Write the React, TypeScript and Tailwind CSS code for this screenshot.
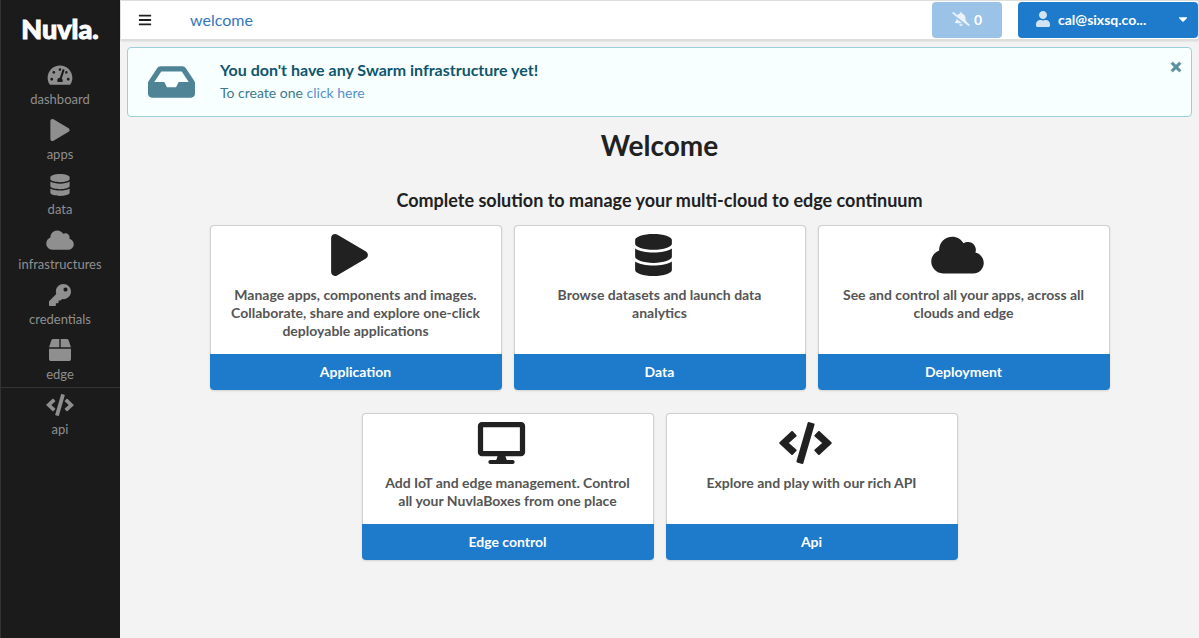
import type { IconType } from 'react-icons';
import {
  FaBars,
  FaBellSlash,
  FaBox,
  FaCaretDown,
  FaCloud,
  FaCode,
  FaDatabase,
  FaDesktop,
  FaInbox,
  FaKey,
  FaPlay,
  FaTachometerAlt,
  FaTimes,
  FaUser,
} from 'react-icons/fa';

const navItems: { label: string; icon: IconType }[] = [
  { label: 'dashboard', icon: FaTachometerAlt },
  { label: 'apps', icon: FaPlay },
  { label: 'data', icon: FaDatabase },
  { label: 'infrastructures', icon: FaCloud },
  { label: 'credentials', icon: FaKey },
  { label: 'edge', icon: FaBox },
  { label: 'api', icon: FaCode },
];

type CardData = { title: string; text: string; icon: IconType };

const cardRows: CardData[][] = [
  [
    {
      title: 'Application',
      text: 'Manage apps, components and images. Collaborate, share and explore one-click deployable applications',
      icon: FaPlay,
    },
    { title: 'Data', text: 'Browse datasets and launch data analytics', icon: FaDatabase },
    { title: 'Deployment', text: 'See and control all your apps, across all clouds and edge', icon: FaCloud },
  ],
  [
    {
      title: 'Edge control',
      text: 'Add IoT and edge management. Control all your NuvlaBoxes from one place',
      icon: FaDesktop,
    },
    { title: 'Api', text: 'Explore and play with our rich API', icon: FaCode },
  ],
];

function Sidebar() {
  return (
    <nav className="w-[120px] shrink-0 bg-[#1b1b1b] shadow-[inset_1px_0_0_#333]">
      <a
        href="#welcome"
        className="flex h-[57px] items-center justify-center text-[27px] leading-none font-black text-white [-webkit-text-stroke:1px_white]"
      >
        Nuvla.
      </a>
      <ul>
        {navItems.map(({ label, icon: Icon }) => (
          <li key={label} className="last:shadow-[inset_0_1px_0_#333435]">
            <a href={`#${label}`} className="flex h-[55px] flex-col items-center pt-[7px] text-[13px] leading-4 text-[#8f8f8f]">
              <Icon className="h-[22px] w-7" />
              <span className="mt-[5px]">{label}</span>
            </a>
          </li>
        ))}
      </ul>
    </nav>
  );
}

function Header() {
  return (
    <header className="flex h-10 items-center border border-[#dddede] bg-white shadow-[0_1px_2px_rgba(34,36,38,0.15)]">
      <button type="button" aria-label="Toggle menu" className="ml-[17px] text-[14px] text-[#1f1f1f]">
        <FaBars />
      </button>
      <a href="#welcome" className="ml-[38px] text-[16px] text-[#3577c1]">
        welcome
      </a>
      <button
        type="button"
        disabled
        className="ml-auto flex h-9 w-[70px] items-center justify-center gap-1 rounded bg-[#9bc3e8] pb-0.5 text-[14px] font-bold text-white"
      >
        <FaBellSlash className="h-[14px] w-[18px] opacity-80" />
        0
      </button>
      <button
        type="button"
        className="ml-4 flex h-9 w-[180px] items-center rounded bg-[#1e7acb] pr-2 pb-0.5 pl-[18px] text-[14px] font-bold text-white"
      >
        <FaUser className="mr-2 h-4 w-[14px] opacity-80" />
        cal@sixsq.co...
        <FaCaretDown className="ml-auto text-[14px]" />
      </button>
    </header>
  );
}

function Notice() {
  return (
    <section className="mx-[7px] mt-[7px] flex h-[70px] items-center rounded border border-[#9ccfd8] bg-[#f8ffff] pl-5">
      <FaInbox className="h-[42px] w-[47px] text-[#4f8396]" />
      <div className="ml-[25px] pb-0.5">
        <h3 className="text-[16px] leading-5 font-bold text-[#0e566c]">You don't have any Swarm infrastructure yet!</h3>
        <p className="mt-[3px] text-[14px] leading-5 text-[#3e7a8c]">
          To create one{' '}
          <a href="#create" className="text-[#558fcd]">
            click here
          </a>
        </p>
      </div>
      <button type="button" aria-label="Dismiss" className="mt-3 mr-2 ml-auto self-start text-[14px] text-[#5b8fa0]">
        <FaTimes className="stroke-current stroke-[24]" />
      </button>
    </section>
  );
}

function Card({ title, text, icon: Icon }: CardData) {
  return (
    <article className="flex w-[292px] flex-col rounded shadow-[0_1px_2px_rgba(34,36,38,0.15)]">
      <div className="flex grow flex-col items-center rounded-t border border-b-0 border-[#cfcfcf] bg-white px-[14px] pt-2 pb-[14px]">
        <Icon className="mr-3 h-[42px] w-[53px] text-[#212121]" />
        <p className="mt-[10px] text-center text-[14px] leading-[18px] font-bold text-[#555]">{text}</p>
      </div>
      <button type="button" className="h-9 rounded-b bg-[#1e7acb] pb-0.5 text-[14px] font-bold text-white">
        {title}
      </button>
    </article>
  );
}

export default function App() {
  return (
    <div className="flex min-h-screen bg-[#f3f3f3] font-[Lato,sans-serif]">
      <Sidebar />
      <div className="min-w-0 grow">
        <Header />
        <Notice />
        <main className="text-center text-[#212121]">
          <h1 className="mt-[10px] text-[28px] leading-9 font-bold">Welcome</h1>
          <h2 className="mt-[25px] text-[18px] leading-6 font-bold">
            Complete solution to manage your multi-cloud to edge continuum
          </h2>
          <div className="mt-[13px] flex flex-col gap-[23px]">
            {cardRows.map((row) => (
              <div key={row[0].title} className="flex flex-wrap justify-center gap-3">
                {row.map((card) => (
                  <Card key={card.title} {...card} />
                ))}
              </div>
            ))}
          </div>
        </main>
      </div>
    </div>
  );
}
